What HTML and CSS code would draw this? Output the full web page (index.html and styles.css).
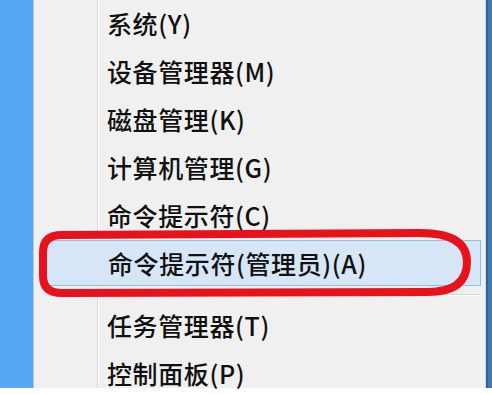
FILE: index.html
```html
<!DOCTYPE html>
<html>
<head>
<meta charset="utf-8">
<link rel="stylesheet" href="styles.css">
</head>
<body>
<div class="screen">
  <div class="desktop"></div>
  <div class="menu">
    <div class="iconcol"></div>
    <div class="items">
      <div class="item">系统(Y)</div>
      <div class="item">设备管理器(M)</div>
      <div class="item">磁盘管理(K)</div>
      <div class="item">计算机管理(G)</div>
      <div class="item">命令提示符(C)</div>
      <div class="item active">命令提示符(管理员)(A)</div>
      <div class="sep"></div>
      <div class="item">任务管理器(T)</div>
      <div class="item last">控制面板(P)</div>
    </div>
  </div>
  <div class="edge"></div>
  <svg class="circle" width="492" height="394" viewBox="0 0 492 394">
    <path d="M62 235 L420 233 Q467 233 467 262 Q467 292 428 292 L62 293 Q43 293 43 276 L43 252 Q43 235 62 235 Z" fill="none" stroke="#e8121c" stroke-width="8" stroke-linejoin="round"/>
  </svg>
</div>
</body>
</html>
```
FILE: styles.css
```css
html, body {
  margin: 0;
  padding: 0;
  background: #ffffff;
}
.screen {
  position: relative;
  width: 492px;
  height: 394px;
  display: flex;
  align-items: flex-start;
}
.desktop {
  width: 33px;
  height: 388px;
  background: #56a8f5;
  border-right: 1px solid #bfc6cc;
}
.menu {
  width: 451px;
  height: 388px;
  background: #f0f0f0;
  border-right: 1px solid #d6d6d6;
  display: flex;
}
.edge {
  width: 6px;
  height: 388px;
  background: linear-gradient(to right, #2a6798 0, #2a6798 2px, #3d7bb0 2px);
}
.iconcol {
  width: 63px;
  border-right: 1px solid #dadada;
  box-shadow: 1px 0 0 #fbfbfb;
  flex: none;
}
.items {
  flex: 1;
  margin-top: -1px;
  margin-left: -65px;
  display: flex;
  flex-direction: column;
  position: relative;
  z-index: 1;
}
.item {
  flex: none;
  height: 48px;
  line-height: 48px;
  padding-left: 74px;
  font-family: "Noto Sans CJK SC", "Noto Sans", sans-serif;
  font-size: 25px;
  font-weight: 500;
  letter-spacing: 0.6px;
  color: #111111;
  white-space: nowrap;
  box-sizing: border-box;
}
.item.last {
  height: 39px;
  line-height: 34px;
  padding-top: 7px;
}
.item.active {
  margin: 1px 4px 1px 12px;
  height: 46px;
  line-height: 44px;
  padding-left: 62px;
  background: #d6e6f7;
  border: 1px solid #8fbfec;
}
.sep {
  flex: none;
  height: 14px;
  margin-left: 72px;
  margin-right: 4px;
  position: relative;
}
.sep::after {
  content: "";
  position: absolute;
  left: 0;
  right: 0;
  top: 7px;
  height: 1px;
  background: #d8d8d8;
  box-shadow: 0 1px 0 #fdfdfd;
}
.circle {
  position: absolute;
  left: 0;
  top: 0;
  z-index: 2;
}
```
